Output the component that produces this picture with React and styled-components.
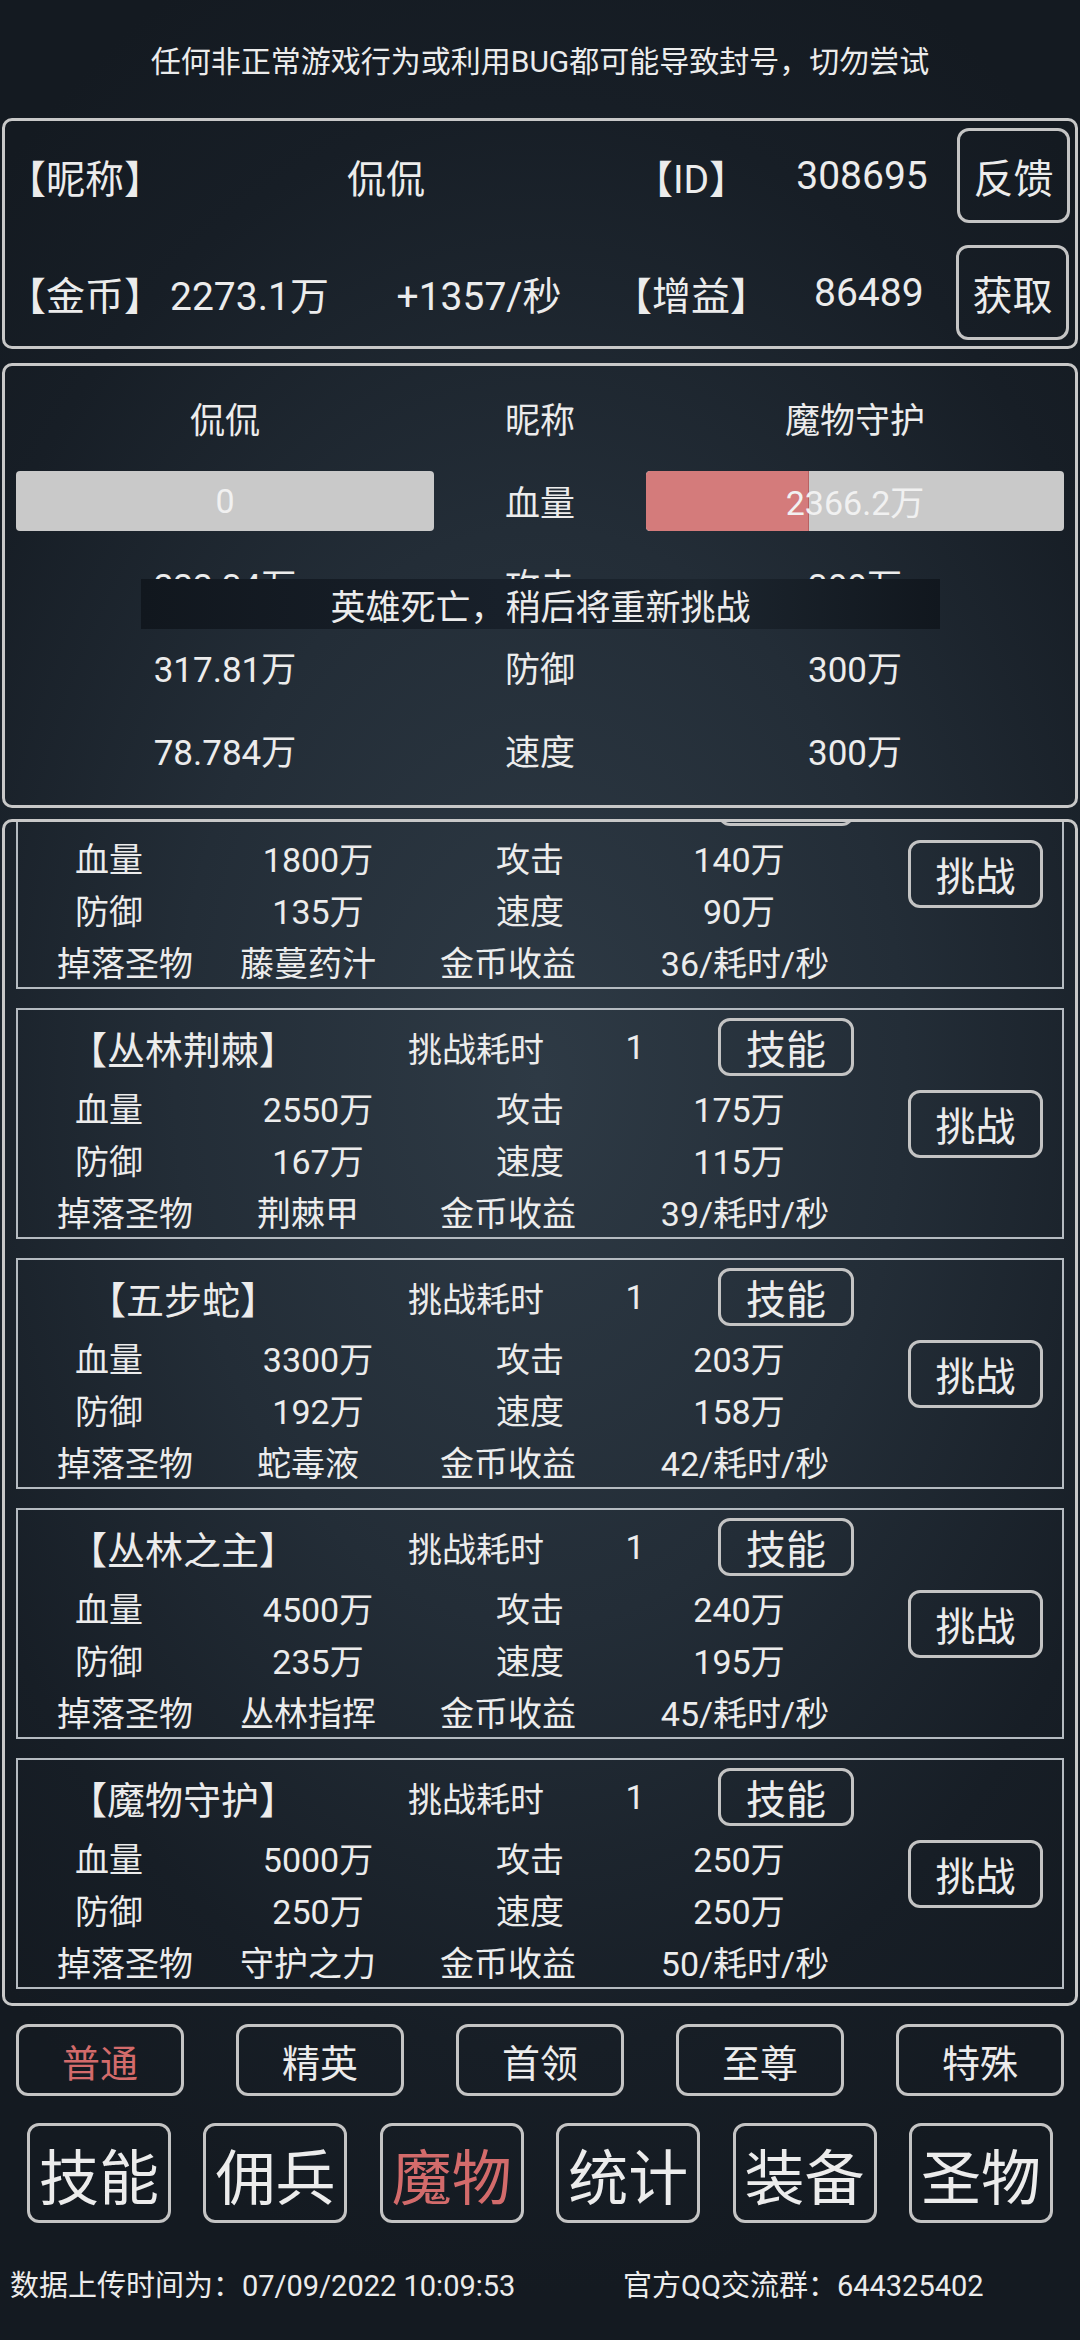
import React, { useLayoutEffect, useRef } from "react";
import styled, { createGlobalStyle } from "styled-components";

const GlobalStyle = createGlobalStyle`
  html, body {
    margin: 0;
    padding: 0;
  }
  body {
    width: 1080px;
    min-height: 2340px;
    background: radial-gradient(ellipse 75% 52% at 50% 46%, #2e3a45 0%, #232d37 45%, #171e26 80%, #141a21 100%);
    font-family: Roboto, "Noto Sans CJK SC", sans-serif;
    color: #ececec;
  }
  * {
    box-sizing: border-box;
  }
`;

const Page = styled.div`
  width: 1080px;
  height: 2340px;
  display: flex;
  flex-direction: column;
`;

const Notice = styled.div`
  height: 118px;
  display: flex;
  align-items: center;
  justify-content: center;
  font-size: 30px;
`;

const Panel = styled.section`
  margin: ${(p) => p.$mt || 0}px 2px 0;
  height: ${(p) => p.$h}px;
  border: 3px solid #c8c8c8;
  border-radius: 10px;
  flex-shrink: 0;
`;

const InfoPanel = styled(Panel)`
  padding: 7px 6px 0 2px;
  display: flex;
  flex-direction: column;
  gap: 22px;
  font-size: 39px;
`;

const InfoRow = styled.div`
  height: 95px;
  display: flex;
  align-items: center;
`;

const Cell = styled.div`
  width: ${(p) => p.$w}px;
  flex-shrink: 0;
  text-align: ${(p) => p.$align || "center"};
  white-space: nowrap;
`;

const OutlineButton = styled.button`
  flex-shrink: 0;
  display: flex;
  align-items: center;
  justify-content: center;
  background: transparent;
  border: 3px solid #c4c4c4;
  border-radius: 12px;
  color: ${(p) => (p.$active ? "#d36b6b" : "#ececec")};
  font-family: inherit;
  padding: 0;
`;

const SideButton = styled(OutlineButton)`
  margin-left: auto;
  width: 113px;
  height: 95px;
  font-size: 40px;
`;

const BattlePanel = styled(Panel)`
  position: relative;
  padding: 10px 11px 16px;
  display: grid;
  grid-template-columns: 418px 1fr 418px;
  grid-auto-rows: 83px;
  align-items: center;
  justify-items: center;
  font-size: 35px;
`;

const HpBar = styled.div`
  position: relative;
  width: 100%;
  height: 60px;
  background: #c9c9c9;
  border-radius: 4px;
  overflow: hidden;
  display: flex;
  align-items: center;
  justify-content: center;
  font-size: 34px;
  color: #f1f1f1;
`;

const HpFill = styled.div`
  position: absolute;
  left: 0;
  top: 0;
  bottom: 0;
  background: #d47b7b;
  border-right: 1px solid #b86262;
  border-radius: 4px 0 0 4px;
`;

const HpText = styled.span`
  position: relative;
`;

const Toast = styled.div`
  position: absolute;
  left: 136px;
  top: 213px;
  width: 799px;
  height: 50px;
  display: flex;
  align-items: center;
  justify-content: center;
  background: linear-gradient(90deg, #11171e 0%, #18202a 45%, #1c252e 70%, #11171e 100%);
  font-size: 35px;
`;

const ListPanel = styled(Panel)`
  overflow: hidden;
`;

const Scroller = styled.div`
  height: 100%;
  overflow-y: auto;
  padding: 12px 11px 14px;
  display: flex;
  flex-direction: column;
  gap: 19px;
  scrollbar-width: none;
  &::-webkit-scrollbar {
    display: none;
  }
`;

const MonsterCard = styled.div`
  flex-shrink: 0;
  height: 231px;
  border: 2px solid #b5bbc1;
  display: grid;
  grid-template-columns: 1fr auto;
  align-items: center;
  font-size: 34px;
`;

const CardBody = styled.div`
  align-self: stretch;
  padding-top: 8px;
  display: flex;
  flex-direction: column;
`;

const TitleRow = styled.div`
  height: 58px;
  margin-bottom: 5px;
  display: flex;
  align-items: center;
`;

const Title = styled(Cell)`
  font-size: 38px;
  padding-right: 12px;
`;

const SkillButton = styled(OutlineButton)`
  margin-left: 40px;
  width: 136px;
  height: 58px;
  font-size: 40px;
`;

const StatRow = styled.div`
  height: 52px;
  display: grid;
  grid-template-columns: ${(p) => p.$cols};
  align-items: center;
  justify-items: center;
  white-space: nowrap;
`;

const ChallengeButton = styled(OutlineButton)`
  width: 135px;
  height: 68px;
  margin-right: 19px;
  font-size: 40px;
`;

const TabBar = styled.nav`
  margin-top: 18px;
  padding: 0 16px;
  display: flex;
  justify-content: space-between;
`;

const TabButton = styled(OutlineButton)`
  width: 168px;
  height: 72px;
  font-size: 38px;
`;

const NavBar = styled.nav`
  margin-top: 27px;
  padding: 0 27px;
  display: flex;
  justify-content: space-between;
`;

const NavButton = styled(OutlineButton)`
  width: 144px;
  height: 100px;
  font-size: 60px;
`;

const Footer = styled.footer`
  margin-top: 40px;
  padding-left: 10px;
  height: 40px;
  display: flex;
  align-items: center;
  font-size: 29px;
  white-space: nowrap;
`;

const FooterItem = styled.span`
  width: ${(p) => (p.$w ? `${p.$w}px` : "auto")};
`;

const monsters = [
  { name: "【丛林藤蔓】", hp: "1800万", atk: "140万", def: "135万", spd: "90万", drop: "藤蔓药汁", gold: "36/耗时/秒" },
  { name: "【丛林荆棘】", hp: "2550万", atk: "175万", def: "167万", spd: "115万", drop: "荆棘甲", gold: "39/耗时/秒" },
  { name: "【五步蛇】", hp: "3300万", atk: "203万", def: "192万", spd: "158万", drop: "蛇毒液", gold: "42/耗时/秒" },
  { name: "【丛林之主】", hp: "4500万", atk: "240万", def: "235万", spd: "195万", drop: "丛林指挥", gold: "45/耗时/秒" },
  { name: "【魔物守护】", hp: "5000万", atk: "250万", def: "250万", spd: "250万", drop: "守护之力", gold: "50/耗时/秒" },
];

const STAT_COLS = "182px 236px 188px 230px";
const DROP_COLS = "214px 152px 248px 226px";

const battleRows = [
  ["317.81万", "防御", "300万"],
  ["78.784万", "速度", "300万"],
];

const tabs = ["普通", "精英", "首领", "至尊", "特殊"];
const navs = ["技能", "佣兵", "魔物", "统计", "装备", "圣物"];

function Monster({ m }) {
  return (
    <MonsterCard>
      <CardBody>
        <TitleRow>
          <Title $w={342}>{m.name}</Title>
          <Cell $w={232}>挑战耗时</Cell>
          <Cell $w={86}>1</Cell>
          <SkillButton>技能</SkillButton>
        </TitleRow>
        <StatRow $cols={STAT_COLS}>
          <span>血量</span>
          <span>{m.hp}</span>
          <span>攻击</span>
          <span>{m.atk}</span>
        </StatRow>
        <StatRow $cols={STAT_COLS}>
          <span>防御</span>
          <span>{m.def}</span>
          <span>速度</span>
          <span>{m.spd}</span>
        </StatRow>
        <StatRow $cols={DROP_COLS}>
          <span>掉落圣物</span>
          <span>{m.drop}</span>
          <span>金币收益</span>
          <span>{m.gold}</span>
        </StatRow>
      </CardBody>
      <ChallengeButton>挑战</ChallengeButton>
    </MonsterCard>
  );
}

export default function App() {
  const listRef = useRef(null);

  useLayoutEffect(() => {
    if (listRef.current) listRef.current.scrollTop = listRef.current.scrollHeight;
  }, []);

  const bossHp = 39;

  return (
    <>
      <GlobalStyle />
      <Page>
        <Notice>任何非正常游戏行为或利用BUG都可能导致封号，切勿尝试</Notice>

        <InfoPanel $h={231}>
          <InfoRow>
            <Cell $w={150} $align="left">【昵称】</Cell>
            <Cell $w={458}>侃侃</Cell>
            <Cell $w={152}>【ID】</Cell>
            <Cell $w={190}>308695</Cell>
            <SideButton>反馈</SideButton>
          </InfoRow>
          <InfoRow>
            <Cell $w={163} $align="left">【金币】</Cell>
            <Cell $w={220} $align="left">2273.1万</Cell>
            <Cell $w={178}>+1357/秒</Cell>
            <Cell $w={246}>【增益】</Cell>
            <Cell $w={96}>86489</Cell>
            <SideButton>获取</SideButton>
          </InfoRow>
        </InfoPanel>

        <BattlePanel $mt={14} $h={445}>
          <span>侃侃</span>
          <span>昵称</span>
          <span>魔物守护</span>

          <HpBar>
            <HpText>0</HpText>
          </HpBar>
          <span>血量</span>
          <HpBar>
            <HpFill style={{ width: `${bossHp}%` }} />
            <HpText>2366.2万</HpText>
          </HpBar>

          <span>222.34万</span>
          <span>攻击</span>
          <span>300万</span>

          {battleRows.map((r) =>
            r.map((v, i) => <span key={r[1] + i}>{v}</span>)
          )}

          <Toast>英雄死亡，稍后将重新挑战</Toast>
        </BattlePanel>

        <ListPanel $mt={11} $h={1187}>
          <Scroller ref={listRef}>
            {monsters.map((m) => (
              <Monster key={m.name} m={m} />
            ))}
          </Scroller>
        </ListPanel>

        <TabBar>
          {tabs.map((t, i) => (
            <TabButton key={t} $active={i === 0}>{t}</TabButton>
          ))}
        </TabBar>

        <NavBar>
          {navs.map((n) => (
            <NavButton key={n} $active={n === "魔物"}>{n}</NavButton>
          ))}
        </NavBar>

        <Footer>
          <FooterItem $w={613}>数据上传时间为：07/09/2022 10:09:53</FooterItem>
          <FooterItem>官方QQ交流群：644325402</FooterItem>
        </Footer>
      </Page>
    </>
  );
}
